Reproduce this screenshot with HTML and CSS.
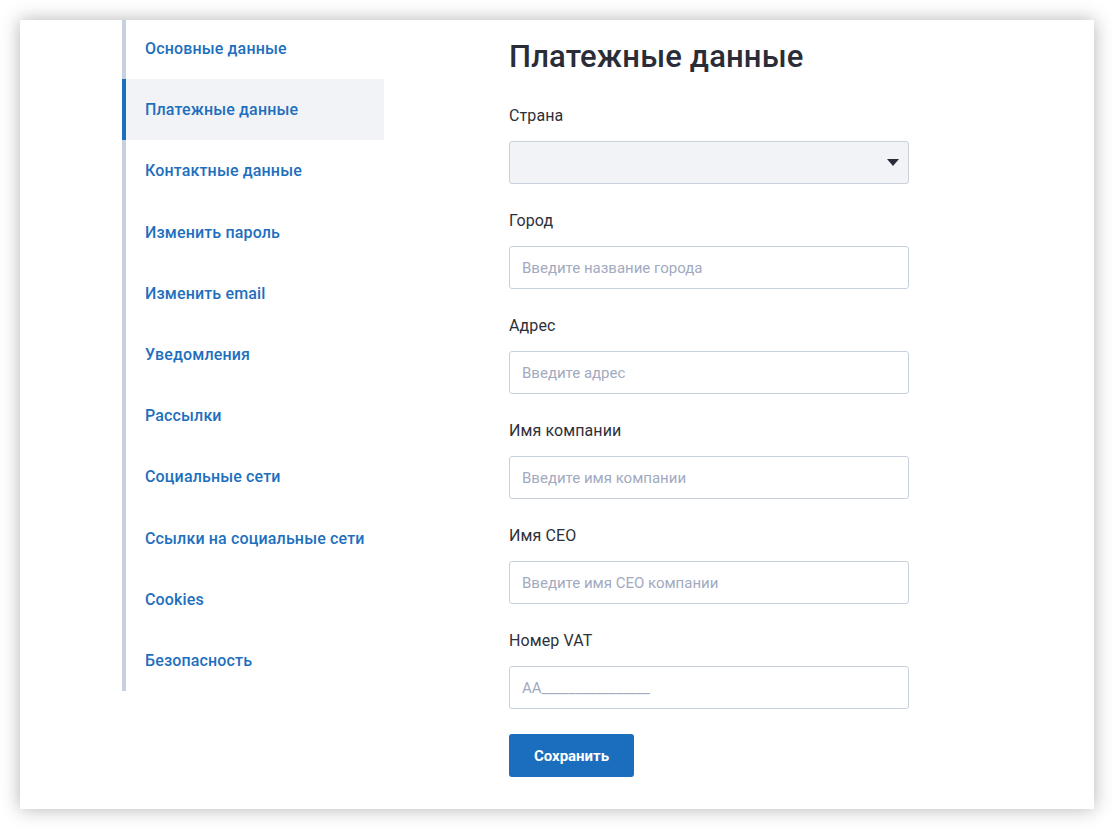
FILE: index.html
```html
<!DOCTYPE html>
<html lang="ru">
<head>
  <meta charset="UTF-8">
  <meta name="viewport" content="width=device-width, initial-scale=1.0">
  <title>Платежные данные</title>
  <link rel="stylesheet" href="styles.css">
</head>
<body>
  <div class="card">
    <ul class="side-nav">
      <li><a href="#">Основные данные</a></li>
      <li class="active"><a href="#">Платежные данные</a></li>
      <li><a href="#">Контактные данные</a></li>
      <li><a href="#">Изменить пароль</a></li>
      <li><a href="#">Изменить email</a></li>
      <li><a href="#">Уведомления</a></li>
      <li><a href="#">Рассылки</a></li>
      <li><a href="#">Социальные сети</a></li>
      <li><a href="#">Ссылки на социальные сети</a></li>
      <li><a href="#">Cookies</a></li>
      <li><a href="#">Безопасность</a></li>
    </ul>

    <form class="content">
      <h1>Платежные данные</h1>

      <div class="field">
        <label for="country">Страна</label>
        <div class="select-wrap">
          <select id="country"><option></option></select>
          <svg class="caret" width="12" height="7" viewBox="0 0 12 7"><path d="M0 0h12L6 7z" fill="#2a2d38"/></svg>
        </div>
      </div>

      <div class="field">
        <label for="city">Город</label>
        <input type="text" id="city" placeholder="Введите название города">
      </div>

      <div class="field">
        <label for="address">Адрес</label>
        <input type="text" id="address" placeholder="Введите адрес">
      </div>

      <div class="field">
        <label for="company">Имя компании</label>
        <input type="text" id="company" placeholder="Введите имя компании">
      </div>

      <div class="field">
        <label for="ceo">Имя CEO</label>
        <input type="text" id="ceo" placeholder="Введите имя CEO компании">
      </div>

      <div class="field">
        <label for="vat">Номер VAT</label>
        <input type="text" id="vat" placeholder="AA________________">
      </div>

      <button type="button" class="btn">Сохранить</button>
    </form>
  </div>
</body>
</html>
```

FILE: styles.css
```css
/* Page */
body {
  margin: 0;
  padding: 20px;
  background: #fff;
  font-family: Roboto, "Liberation Sans", sans-serif;
}
.card {
  display: flex;
  height: 789px;
  box-sizing: border-box;
  padding-left: 102px;
  background: #fff;
  box-shadow: 0 0 18px rgba(0, 0, 0, 0.3);
  overflow: hidden;
}

/* Sidebar */
.side-nav {
  list-style: none;
  margin: -2px 0 0;
  padding: 0;
  width: 258px;
  align-self: flex-start;
  border-left: 4px solid #c6d0de;
}
.side-nav li {
  position: relative;
}
.side-nav a {
  display: block;
  padding: 20px 0 20px 19px;
  line-height: 21.2px;
  font-size: 16px;
  font-weight: 500;
  letter-spacing: 0.15px;
  color: #1e6fbe;
  text-decoration: none;
}
.side-nav .active {
  background: #f2f3f7;
}
.side-nav .active::before {
  content: "";
  position: absolute;
  left: -4px;
  top: 0;
  bottom: 0;
  width: 4px;
  background: #1b6fc0;
}

/* Form */
.content {
  margin-left: 125px;
  width: 400px;
  padding-top: 18px;
}
.content h1 {
  margin: 0 0 30px;
  font-size: 31px;
  line-height: 38px;
  font-weight: 500;
  letter-spacing: 0.15px;
  color: #2a2d38;
}
.field {
  margin-bottom: 27px;
}
.field:last-of-type {
  margin-bottom: 25px;
}
.field label {
  display: block;
  margin-bottom: 15px;
  font-size: 16px;
  line-height: 20px;
  font-weight: 400;
  letter-spacing: 0.1px;
  color: #2d3039;
}
.field input,
.field select {
  display: block;
  width: 100%;
  height: 43px;
  box-sizing: border-box;
  padding: 0 12px;
  border: 1px solid #c8d0dd;
  border-radius: 3px;
  background: #fff;
  font-family: inherit;
  font-size: 15px;
  color: #2d3039;
  outline: none;
}
.field input::placeholder {
  color: #a2aac0;
}
.select-wrap {
  position: relative;
}
.field select {
  appearance: none;
  background: #f2f3f7;
}
.caret {
  position: absolute;
  right: 10px;
  top: 18px;
}
.btn {
  width: 125px;
  height: 43px;
  border: 0;
  border-radius: 3px;
  background: #1b6ebe;
  color: #fff;
  font-family: inherit;
  font-size: 15px;
  font-weight: 700;
  cursor: pointer;
}
```
